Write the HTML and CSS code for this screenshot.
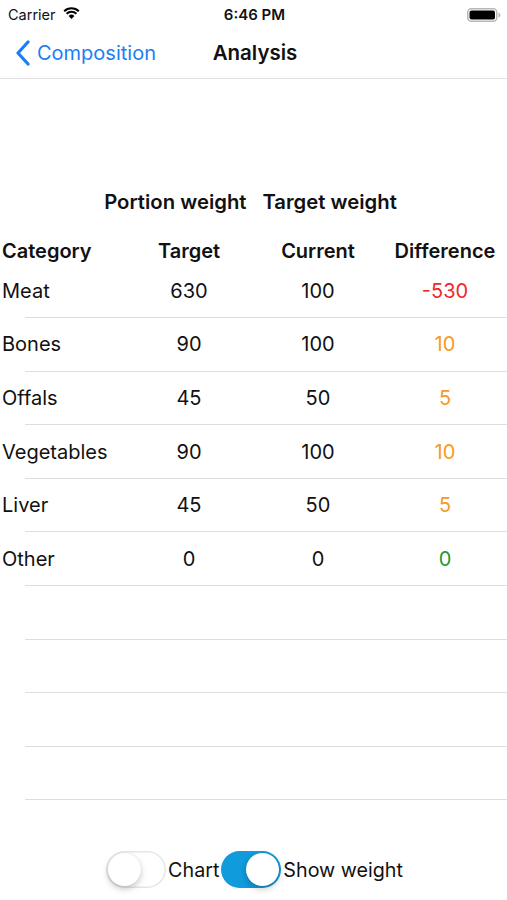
FILE: index.html
```html
<!DOCTYPE html>
<html lang="en">
<head>
<meta charset="utf-8">
<title>Analysis</title>
<link rel="stylesheet" href="styles.css">
</head>
<body>
<div class="screen">
  <div class="status">
    <div class="status-left">
      <span class="carrier">Carrier</span>
      <svg class="wifi" width="17" height="12" viewBox="0 0 17 12">
        <path d="M8.5 12 L5.6 8.9 A4.2 4.2 0 0 1 11.4 8.9 Z" fill="#000"/>
        <path d="M3.6 6.8 A7 7 0 0 1 13.4 6.8" fill="none" stroke="#000" stroke-width="2"/>
        <path d="M1.2 4.3 A10.4 10.4 0 0 1 15.8 4.3" fill="none" stroke="#000" stroke-width="2"/>
      </svg>
    </div>
    <div class="time">6:46 PM</div>
    <div class="status-right">
      <svg class="battery" width="34" height="14" viewBox="0 0 34 14">
        <rect x="0.75" y="0.75" width="29" height="12.5" rx="3.5" fill="none" stroke="#b8b8b8" stroke-width="1.5"/>
        <rect x="2.5" y="2.5" width="25.5" height="9" rx="2" fill="#000"/>
        <path d="M31.5 4.5 Q33.5 5 33.5 7 Q33.5 9 31.5 9.5 Z" fill="#b8b8b8"/>
      </svg>
    </div>
  </div>

  <div class="nav">
    <div class="back">
      <svg class="chevron" width="16" height="26" viewBox="0 0 16 26">
        <polyline points="13,2 3,13 13,24" fill="none" stroke="#1a7ff2" stroke-width="3.2" stroke-linecap="round" stroke-linejoin="round"/>
      </svg>
      <span>Composition</span>
    </div>
    <div class="title">Analysis</div>
    <div class="nav-spacer"></div>
  </div>

  <div class="content">
    <div class="groups">
      <span>Portion weight</span>
      <span>Target weight</span>
    </div>
    <div class="row head">
      <div class="c1">Category</div>
      <div class="cc">Target</div>
      <div class="cc">Current</div>
      <div class="cc">Difference</div>
    </div>
    <div class="table">
      <div class="row"><div class="c1">Meat</div><div class="cc">630</div><div class="cc">100</div><div class="cc red">-530</div></div>
      <div class="row"><div class="c1">Bones</div><div class="cc">90</div><div class="cc">100</div><div class="cc orange">10</div></div>
      <div class="row"><div class="c1">Offals</div><div class="cc">45</div><div class="cc">50</div><div class="cc orange">5</div></div>
      <div class="row"><div class="c1">Vegetables</div><div class="cc">90</div><div class="cc">100</div><div class="cc orange">10</div></div>
      <div class="row"><div class="c1">Liver</div><div class="cc">45</div><div class="cc">50</div><div class="cc orange">5</div></div>
      <div class="row"><div class="c1">Other</div><div class="cc">0</div><div class="cc">0</div><div class="cc green">0</div></div>
      <div class="row empty"></div>
      <div class="row empty"></div>
      <div class="row empty"></div>
      <div class="row empty"></div>
    </div>
    <div class="toggles">
      <div class="switch off"><div class="knob"></div></div>
      <span class="tlabel">Chart</span>
      <div class="switch on"><div class="knob"></div></div>
      <span class="tlabel">Show weight</span>
    </div>
  </div>
</div>
</body>
</html>
```

FILE: styles.css
```css
* { box-sizing: border-box; }
html, body { margin: 0; padding: 0; background: #fff; }
body {
  font-family: Inter, "Noto Sans", "Liberation Sans", sans-serif;
  color: #111;
  width: 507px;
}
.screen { width: 507px; height: 900px; overflow: hidden; }

.status {
  height: 25px;
  display: flex;
  align-items: center;
  justify-content: space-between;
  padding: 3px 6px 0 8px;
}
.status-left { display: flex; align-items: center; gap: 7px; width: 120px; }
.carrier { font-size: 14.5px; }
.wifi { margin-top: -2px; }
.time { font-size: 15px; font-weight: 600; }
.status-right { width: 120px; display: flex; justify-content: flex-end; }
.battery { margin-top: 1px; }

.nav {
  height: 54px;
  border-bottom: 1px solid #e2e2e2;
  display: flex;
  align-items: center;
  padding: 2px 0 0 15px;
}
.back {
  display: flex;
  align-items: center;
  gap: 6px;
  color: #1a7ff2;
  font-size: 20px;
  width: 160px;
}
.chevron { flex: none; }
.title {
  flex: 1;
  text-align: center;
  font-weight: 600;
  font-size: 20.5px;
  padding-right: 12px;
}
.nav-spacer { width: 160px; }

.content { display: flex; flex-direction: column; }
.groups {
  margin-top: 110px;
  height: 25px;
  display: flex;
  justify-content: center;
  gap: 16px;
  font-weight: 600;
  font-size: 20.3px;
  padding-right: 6px;
}
.row {
  display: grid;
  grid-template-columns: 125px 128px 130px 124px;
  align-items: center;
  font-size: 20px;
  height: 53.6px;
  padding-bottom: 1px;
  background: linear-gradient(#dedede, #dedede) no-repeat 25px 100% / calc(100% - 25px) 1px;
}
.row.head {
  margin-top: 24px;
  height: 26.5px;
  padding-bottom: 1px;
  font-weight: 600;
  background: none;
}
.c1 { padding-left: 2px; }
.cc { text-align: center; }
.red { color: #f0282a; }
.orange { color: #f59a24; }
.green { color: #2a962a; }

.toggles {
  margin-top: 51px;
  display: flex;
  align-items: center;
  justify-content: center;
  gap: 2px;
  font-size: 19.7px;
  padding-left: 2px;
}
.switch {
  width: 60px;
  height: 37px;
  border-radius: 19px;
  display: flex;
  align-items: center;
  padding: 2px;
}
.switch.off {
  background: #fff;
  box-shadow: inset 0 0 0 1.5px #e6e6e6;
  justify-content: flex-start;
}
.switch.on {
  background: #0f9bdc;
  justify-content: flex-end;
}
.knob {
  width: 33px;
  height: 33px;
  border-radius: 50%;
  background: #fff;
  box-shadow: 0 3px 6px rgba(0,0,0,0.22), 0 0 0 0.5px rgba(0,0,0,0.06);
}
.tlabel { color: #111; }
```
